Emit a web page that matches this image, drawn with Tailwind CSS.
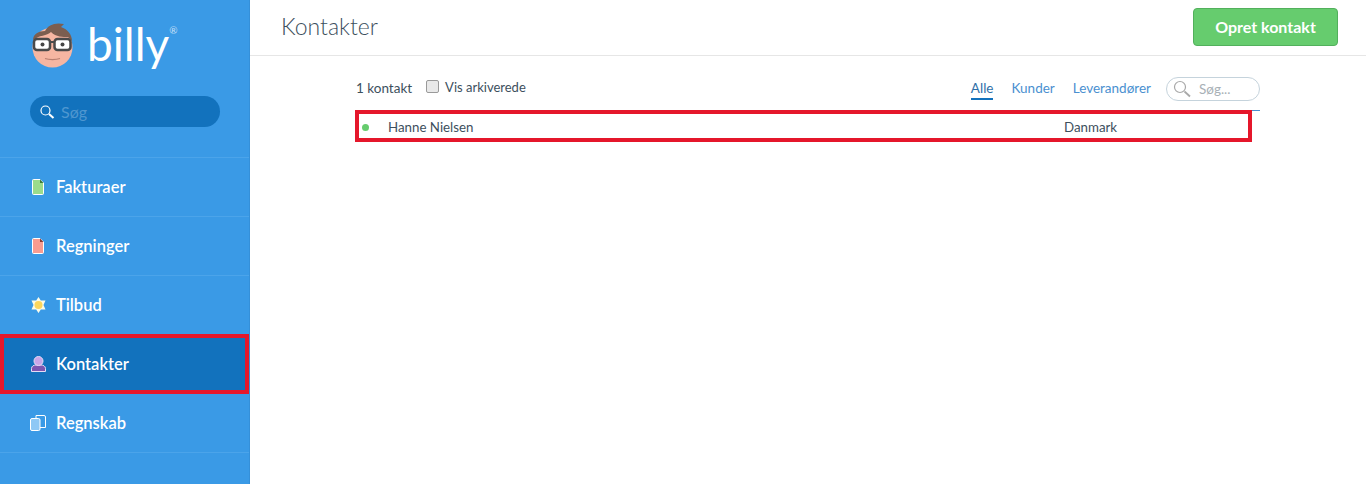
<!DOCTYPE html>
<html lang="da">
<head>
    <meta charset="UTF-8">
    <title>Billy - Kontakter</title>
    <script src="https://cdn.jsdelivr.net/npm/@tailwindcss/browser@4"></script>
</head>
<body class="h-[484px] overflow-hidden bg-white font-['Lato','Open_Sans',sans-serif]">
    <div class="flex h-[484px]">
        <!-- sidebar -->
        <aside class="w-[250px] shrink-0 border-r border-[#3590d9] bg-[#3a9ae6]">
            <div class="h-[158px] border-b border-[#4ba4ea]">
                <div class="flex h-[96px] items-start pl-[31px] pt-[21px]">
                    <svg width="44" height="48" viewBox="0 0 44 48" class="shrink-0">
                        <circle cx="21.500" cy="26.500" r="20" fill="#f6b6a2"/>
                        <path d="M2 19C2 13 8 10 14 10C17 4 24 1 33 3L30 6C36 8 41 13 41 20L37 16C32 16 25 16 20 11C16 15 8 14 2 19Z" fill="#7b5e50"/>
                        <rect x="3" y="18" width="16" height="11" rx="3" fill="#fff" stroke="#4a4a4a" stroke-width="2.500"/>
                        <rect x="23.500" y="18" width="16" height="11" rx="3" fill="#fff" stroke="#4a4a4a" stroke-width="2.500"/>
                        <path d="M19 21H23.500" stroke="#4a4a4a" stroke-width="2"/>
                        <circle cx="11.500" cy="23.500" r="2" fill="#444"/>
                        <circle cx="31.500" cy="23.500" r="2" fill="#444"/>
                        <path d="M14 37.500C18 39 25 39 29 37.500" stroke="#b97f70" stroke-width="1.200" fill="none"/>
                    </svg>
                    <span class="ml-[12px] mt-[-7px] text-[46px] leading-[60px] font-normal text-white">billy</span>
                    <span class="mt-[3px] text-[10px] leading-[12px] text-white/70">®</span>
                </div>
                <div class="ml-[30px] mr-[29px] flex h-[31px] items-center rounded-full bg-[#1272bd] pl-[9px]">
                    <svg width="16" height="16" viewBox="0 0 16 16" fill="none" stroke="#fff">
                        <circle cx="6.500" cy="6.500" r="4.500" stroke-width="1.200"/>
                        <path d="M10 10L14.500 14" stroke-width="2"/>
                    </svg>
                    <span class="ml-[6px] text-[16px] text-[#4f97d0]">Søg</span>
                </div>
            </div>
            <nav class="text-[16.500px] font-semibold text-white">
                <a class="flex h-[59px] items-center border-b border-[#4ba4ea] pl-[32px]">
                    <svg width="12" height="16" viewBox="0 0 12 16" class="shrink-0"><path d="M1.500 .5H8L11.500 4V14.500A1 1 0 0 1 10.500 15.500H1.500A1 1 0 0 1 .5 14.500V1.500A1 1 0 0 1 1.500 .5Z" fill="#9bdc8c" stroke="#fff"/><path d="M8 .5V4H11.500Z" fill="#3d7a3a"/></svg>
                    <span class="ml-[12px]">Fakturaer</span>
                </a>
                <a class="flex h-[59px] items-center border-b border-[#4ba4ea] pl-[32px]">
                    <svg width="12" height="16" viewBox="0 0 12 16" class="shrink-0"><path d="M1.500 .5H8L11.500 4V14.500A1 1 0 0 1 10.500 15.500H1.500A1 1 0 0 1 .5 14.500V1.500A1 1 0 0 1 1.500 .5Z" fill="#f99c90" stroke="#fff"/><path d="M8 .5V4H11.500Z" fill="#8a3a32"/></svg>
                    <span class="ml-[12px]">Regninger</span>
                </a>
                <a class="flex h-[59px] items-center border-b border-[#4ba4ea] pl-[31px]">
                    <svg width="15" height="16" viewBox="0 0 15 16" class="shrink-0"><path d="M7.500 0L9.800 3.500H14.500L12.500 8L14.500 12.500H9.800L7.500 16L5.200 12.500H.5L2.500 8L.5 3.500H5.200Z" fill="#fbfbe8"/><circle cx="7.500" cy="8" r="4" fill="#fbd65c"/></svg>
                    <span class="ml-[10px]">Tilbud</span>
                </a>
                <a class="mt-[-1px] flex h-[60px] items-center border-[4px] border-[#e5172b] bg-[#1272bd] pl-[27px]">
                    <svg width="15" height="16" viewBox="0 0 15 16" class="shrink-0"><path d="M.5 15.500V12.500C.5 10 3 9 5 9H10C12 9 14.500 10 14.500 12.500V15.500Z" fill="#7d55b0" stroke="#e5dcf5"/><circle cx="7.500" cy="5" r="4.500" fill="#c9a6e8" stroke="#e5dcf5"/></svg>
                    <span class="ml-[10px]">Kontakter</span>
                </a>
                <a class="flex h-[59px] items-center border-b border-[#4ba4ea] pl-[30px]">
                    <svg width="16" height="16" viewBox="0 0 16 16" class="shrink-0"><path d="M6 .5H14A1.500 1.500 0 0 1 15.500 2V12.500H6Z" fill="#3a9ae6" stroke="#fff"/><rect x=".5" y="3.500" width="9.500" height="12" rx="1.500" fill="#8ec8f5" stroke="#fff"/></svg>
                    <span class="ml-[10px]">Regnskab</span>
                </a>
            </nav>
        </aside>

        <!-- main -->
        <main class="min-w-0 flex-1">
            <header class="flex h-[56px] items-center justify-between border-b border-[#e6e6e6] pb-[2px] pl-[31px] pr-[28px]">
                <h1 class="text-[23px] font-light text-[#3d4f5d]">Kontakter</h1>
                <button class="h-[38px] w-[145px] rounded-[4px] border border-[#52b05c] bg-[#66cc6e] text-[16px] font-bold text-white">Opret kontakt</button>
            </header>
            <div class="ml-[105px] w-[905px] pt-[18px]">
                <div class="flex h-[36px] items-start justify-between text-[13.500px]">
                    <div class="flex items-center pl-[1px] pt-[4px] text-[#3d4f5d]">
                        <span>1 kontakt</span>
                        <span class="ml-[14px] mt-[-3px] h-[13px] w-[13px] rounded-[2px] border border-[#9a9a9a] bg-[#e9e9e9]"></span>
                        <span class="ml-[6px] text-[13px]">Vis arkiverede</span>
                    </div>
                    <div class="flex items-start text-[#4a90d0]">
                        <span class="mt-[4px] h-[22px] border-b-2 border-[#1272bd] text-[#2f6fa8]">Alle</span>
                        <span class="ml-[18px] mt-[4px]">Kunder</span>
                        <span class="ml-[18px] mt-[4px]">Leverandører</span>
                        <div class="ml-[15px] mt-[3px] flex h-[24px] w-[94px] items-center rounded-full border border-[#c5d3dc] pl-[5px]">
                            <svg width="20" height="20" viewBox="0 0 20 20" fill="none" stroke="#a8a8a8" class="shrink-0">
                                <circle cx="8" cy="8" r="5.500" stroke-width="1.200"/>
                                <path d="M12.500 12.500L18 17.500" stroke-width="1.800"/>
                            </svg>
                            <span class="ml-[7px] text-[#a8b0b6]">Søg...</span>
                        </div>
                    </div>
                </div>
                <div class="border-t border-[#4a90d0]">
                    <div class="relative mt-[-1px] flex h-[32px] w-[897px] items-center border-[4px] border-[#e5172b] bg-white pt-[3px] text-[13.300px] text-[#3d4f5d]">
                        <span class="ml-[3px] h-[7px] w-[7px] rounded-full bg-[#66cc6e]"></span>
                        <span class="ml-[19px] w-[676px]">Hanne Nielsen</span>
                        <span>Danmark</span>
                    </div>
                </div>
            </div>
        </main>
    </div>
</body>
</html>
